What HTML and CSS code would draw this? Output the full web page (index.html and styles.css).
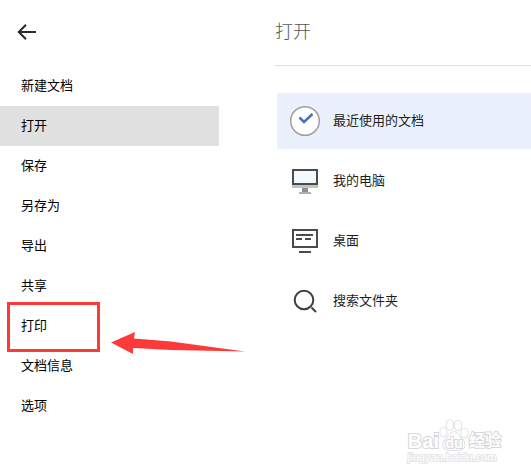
FILE: index.html
```html
<!DOCTYPE html>
<html lang="zh-CN">
<head>
    <meta charset="UTF-8">
    <meta name="viewport" content="width=device-width, initial-scale=1.0">
    <title>打开</title>
    <link rel="stylesheet" href="styles.css">
</head>
<body>
    <div class="page">
        <nav class="sidebar">
            <button type="button" class="back" aria-label="返回">
                <svg width="20" height="18" viewBox="0 0 20 18" fill="none" stroke="#2b2b2b" stroke-width="2">
                    <path d="M2 8H19M9 0.8L1.8 8L9 15.2"/>
                </svg>
            </button>
            <ul class="menu">
                <li><a href="#">新建文档</a></li>
                <li><a href="#" class="active">打开</a></li>
                <li><a href="#">保存</a></li>
                <li><a href="#">另存为</a></li>
                <li><a href="#">导出</a></li>
                <li><a href="#">共享</a></li>
                <li class="marked">
                    <a href="#">打印</a>
                    <span class="mark-box"></span>
                    <svg class="mark-arrow" width="135" height="22" viewBox="0 0 135 22">
                        <path fill="#fb3a39" d="M0 10.5L24 0L23 6.5L60 9.5L134 19.5L60 18L22 16L22 22Z"/>
                    </svg>
                </li>
                <li><a href="#">文档信息</a></li>
                <li><a href="#">选项</a></li>
            </ul>
        </nav>

        <main class="content">
            <h1>打开</h1>
            <ul class="places">
                <li>
                    <a href="#" class="active">
                        <svg width="32" height="32" viewBox="0 0 32 32">
                            <circle cx="16" cy="16" r="14.3" fill="#fff" stroke="#a0a0a0" stroke-width="1.5"/>
                            <path d="M10.5 12.5L15 17L23.5 9" fill="none" stroke="#4a73b5" stroke-width="2.6"/>
                        </svg>
                        <span>最近使用的文档</span>
                    </a>
                </li>
                <li>
                    <a href="#">
                        <svg width="32" height="32" viewBox="0 0 32 32" shape-rendering="crispEdges">
                            <path fill="#4c4a4b" d="M3 4h26v16H3z"/>
                            <path fill="#f2faff" d="M5 6h22v12H5z"/>
                            <path fill="#c3c3c3" d="M3 20h26v3H3z"/>
                            <path fill="#7be04a" d="M27 21h1v1h-1z"/>
                            <path fill="#8f8f8f" d="M13 23h6v4h-6z"/>
                            <path fill="#b0b0b0" d="M10 27h12v2H10z"/>
                        </svg>
                        <span>我的电脑</span>
                    </a>
                </li>
                <li>
                    <a href="#">
                        <svg width="32" height="32" viewBox="0 0 32 32" fill="none" stroke="#4c4a4b" stroke-width="2" shape-rendering="crispEdges">
                            <path d="M4 5h24v17H4z"/>
                            <path d="M7 10h17M7 14h6M16 14h6M10 27h12"/>
                        </svg>
                        <span>桌面</span>
                    </a>
                </li>
                <li>
                    <a href="#">
                        <svg width="32" height="32" viewBox="0 0 32 32" fill="none" stroke="#403e3f" stroke-width="2">
                            <circle cx="15" cy="15" r="9.3"/>
                            <path d="M22.5 22.5L27 27"/>
                        </svg>
                        <span>搜索文件夹</span>
                    </a>
                </li>
            </ul>
        </main>
    </div>

    <div class="watermark">
        <div class="brand">
            <span class="brand-name">Bai</span>
            <span class="paw">
                <svg width="30" height="32" viewBox="0 0 30 32" fill="#fff" stroke="#d8d8d8" stroke-width="1.5">
                    <ellipse cx="11" cy="6" rx="3.5" ry="5"/>
                    <ellipse cx="19" cy="6.5" rx="3.5" ry="5"/>
                    <ellipse cx="4.5" cy="13" rx="3.2" ry="4.6"/>
                    <ellipse cx="25.5" cy="14" rx="3.2" ry="4.6"/>
                    <path d="M15 13C19 13 20 17 23 20C27 24 27 30 20 31H9C3 30 3 24 7 20C10 17 11 13 15 13Z"/>
                </svg>
                <span class="paw-text">du</span>
            </span>
            <span class="brand-sub">经验</span>
        </div>
        <div class="site">jingyan.baidu.com</div>
    </div>
</body>
</html>
```
FILE: styles.css
```css
body {
    margin: 0;
    background: #fff;
    color: #000;
    font-family: "Liberation Sans", "Noto Sans CJK SC", sans-serif;
    font-size: 13px;
}
ul {
    margin: 0;
    padding: 0;
    list-style: none;
}
a {
    color: inherit;
    text-decoration: none;
}
svg {
    display: block;
}
.page {
    display: flex;
    gap: 56px;
}

/* left menu */
.sidebar {
    flex: 0 0 219px;
}
.back {
    display: flex;
    align-items: center;
    height: 66px;
    padding: 0 17px;
    border: none;
    background: none;
    cursor: pointer;
}
.menu a {
    display: block;
    padding: 0 21px;
    line-height: 40px;
}
.menu .active {
    background: #e1e1e1;
}
.marked {
    position: relative;
}
.mark-box {
    position: absolute;
    top: -4px;
    left: 7px;
    box-sizing: border-box;
    width: 93px;
    height: 50px;
    border: 3px solid #fb3a39;
    pointer-events: none;
}
.mark-arrow {
    position: absolute;
    top: 26px;
    left: 111px;
    pointer-events: none;
}

/* right panel */
.content {
    flex: 1;
    min-width: 0;
}
h1 {
    margin: 0;
    border-bottom: 1px solid #e1e1e1;
    color: #555;
    font-size: 18px;
    font-weight: 300;
    line-height: 65px;
}
.places {
    display: flex;
    flex-direction: column;
    gap: 4px;
    padding: 27px 0 0 2px;
}
.places a {
    display: flex;
    align-items: center;
    gap: 12px;
    height: 56px;
    padding: 0 12px;
    color: #1e1e1e;
    line-height: 56px;
}
.places .active {
    background: #eaf1fd;
}

/* watermark */
.watermark {
    position: absolute;
    right: 30px;
    bottom: 12px;
    color: #fff;
    paint-order: stroke;
    -webkit-text-stroke: 2px #d8d8d8;
}
.brand {
    display: flex;
    align-items: flex-end;
    line-height: 20px;
}
.brand-name {
    font-size: 20px;
    font-weight: bold;
}
.paw {
    position: relative;
}
.paw-text {
    position: absolute;
    right: 0;
    bottom: 0;
    left: 0;
    font-size: 14px;
    font-weight: bold;
    line-height: 16px;
    text-align: center;
}
.brand-sub {
    font-size: 16px;
    font-weight: bold;
}
.site {
    font-size: 11px;
    line-height: 12px;
    -webkit-text-stroke: 2px #e6e6e6;
}
```
